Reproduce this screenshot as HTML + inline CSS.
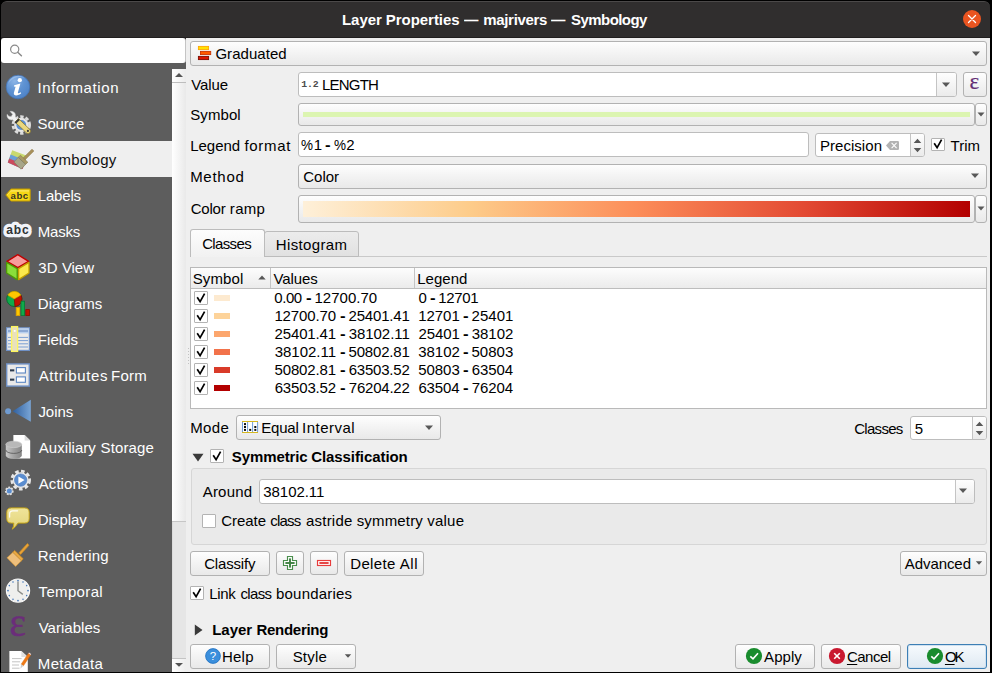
<!DOCTYPE html>
<html><head><meta charset="utf-8"><title>Layer Properties</title>
<style>
html,body{margin:0;padding:0;background:#000;}
body{width:992px;height:673px;overflow:hidden;font-family:"Liberation Sans",sans-serif;font-size:15px;}
#win{position:relative;width:992px;height:673px;overflow:hidden;background:#000;}
.t{position:absolute;white-space:nowrap;line-height:20px;}
.a{position:absolute;box-sizing:border-box;}
svg.a{overflow:visible;}
.btn{border:1px solid #b2b2b2;border-radius:3px;background:linear-gradient(#fefefe,#f4f4f4 45%,#e9e9e9);}
.inp{border:1px solid #bdbdbd;border-radius:3px;background:#fff;}
.cb{border:1px solid #b3b3b3;border-radius:1px;background:#fff;}
.sep{width:1px;background:#c4c4c4;}
u{text-decoration-thickness:1px;text-underline-offset:2px;}

</style></head>
<body>
<div id="win">
<!-- title bar -->
<div class="a" style="left:1px;top:1px;width:989px;height:37px;background:#302e2e;border-radius:6px 6px 0 0;border-top:1px solid #4b4949;"></div>
<div class="a" style="left:962.8px;top:9.8px;width:18.4px;height:18.4px;border-radius:10px;background:#e95420;"></div>
<svg class="a" style="left:962px;top:9px" width="20" height="20" viewBox="0 0 20 20"><path d="M6.5 6.5 L13.5 13.5 M13.5 6.5 L6.5 13.5" stroke="#fff" stroke-width="1.3" stroke-linecap="round" fill="none"/></svg>
<!-- panel background -->
<div class="a" style="left:1px;top:38px;width:989px;height:634px;background:#efefef;"></div>
<!-- search box -->
<div class="a" style="left:1px;top:37px;width:989px;height:1px;background:#211f1f;"></div>
<div class="a" style="left:1px;top:38px;width:185px;height:12px;background:#2a2828;"></div>
<div class="a" style="left:1px;top:50px;width:185px;height:14px;background:#5d5d5d;"></div>
<div class="a" style="left:1px;top:38px;width:185px;height:24.5px;background:#fff;border-right:1px solid #c4c4c4;border-radius:3px;"></div>
<svg class="a" style="left:9px;top:43.5px" width="14" height="14" viewBox="0 0 14 14"><circle cx="5.7" cy="5.3" r="4.1" stroke="#8a8a8a" stroke-width="1.2" fill="none"/><path d="M8.7 8.3 L12.4 11.7" stroke="#8a8a8a" stroke-width="1.5" stroke-linecap="round"/></svg>
<!-- sidebar -->
<div class="a" style="left:1px;top:63px;width:185px;height:6px;background:#5d5d5d;"></div>
<div class="a" style="left:1px;top:69px;width:171px;height:603px;background:#5d5d5d;"></div>
<div class="a" style="left:1px;top:141px;width:171px;height:36px;background:#efefef;"></div>
<!-- sidebar scrollbar -->
<div class="a" style="left:172px;top:69px;width:14px;height:603px;background:#e6e6e6;border-left:1px solid #dcdcdc;"></div>
<div class="a" style="left:172px;top:69px;width:14px;height:14px;background:linear-gradient(90deg,#fff,#ececec);border-bottom:1px solid #bdbdbd;"></div>
<div class="a" style="left:172px;top:83px;width:14px;height:439px;background:linear-gradient(90deg,#fff,#e9e9e9);border-bottom:1px solid #c6c6c6;"></div>
<div class="a" style="left:172px;top:658px;width:14px;height:14px;background:linear-gradient(90deg,#fff,#eeeeee);border-top:1px solid #c4c4c4;"></div>
<svg class="a" style="left:172px;top:69px" width="14" height="14" viewBox="0 0 14 14"><path d="M3 7.9 L7 3.9 L11 7.9 Z" fill="#555"/></svg>
<svg class="a" style="left:172px;top:658px" width="14" height="14" viewBox="0 0 14 14"><path d="M3 5 L7 8.8 L11 5 Z" fill="#555"/></svg>

<!-- Graduated combo -->
<div class="a btn" style="left:190px;top:41px;width:797px;height:25px;"></div>
<svg class="a" style="left:197px;top:45px" width="15" height="16" viewBox="0 0 15 16"><rect x="1.4" y="1.4" width="10.2" height="3.2" fill="#ffe100" stroke="#ffa600" stroke-width="0.9"/><rect x="3.5" y="6.4" width="10.2" height="3.2" fill="#ff5a00" stroke="#c93400" stroke-width="0.9"/><rect x="1.4" y="11.4" width="10.2" height="3.2" fill="#da1500" stroke="#7c0b00" stroke-width="0.9"/></svg>
<svg class="a" style="left:970.5px;top:50.8px" width="10" height="6" viewBox="0 0 10 6"><path d="M1 0.5 L9 0.5 L5 5 Z" fill="#585858"/></svg>

<!-- Value combo -->
<div class="a inp" style="left:298px;top:72px;width:659px;height:25px;"></div>
<div class="a" style="left:936px;top:73px;width:20px;height:23px;border-left:1px solid #c4c4c4;border-radius:0 2px 2px 0;background:linear-gradient(#fefefe,#ebebeb);"></div>
<svg class="a" style="left:940.6px;top:82px" width="10" height="6" viewBox="0 0 10 6"><path d="M1 0.5 L9 0.5 L5 5 Z" fill="#585858"/></svg>
<span class="t" style="left:301.2px;top:77.8px;font-family:'Liberation Mono',monospace;font-size:9.9px;color:#4c4c4c;letter-spacing:-0.1px;font-weight:700;line-height:14px;">1.2</span>
<!-- epsilon button -->
<div class="a btn" style="left:963px;top:72px;width:24px;height:25px;"></div>
<span class="t" style="left:969.6px;top:70.2px;font-family:'Liberation Serif',serif;font-size:23px;color:#632c74;-webkit-text-stroke:0.2px #632c74;line-height:24px;">&#949;</span>

<!-- Symbol button -->
<div class="a btn" style="left:298px;top:103px;width:677px;height:23px;"></div>
<div class="a" style="left:303px;top:112px;width:667px;height:5px;background:#dcf5b1;"></div>
<div class="a btn" style="left:975px;top:103px;width:12px;height:23px;"></div>
<svg class="a" style="left:977px;top:112px" width="8" height="5" viewBox="0 0 8 5"><path d="M0.5 0.5 L7.5 0.5 L4 4.5 Z" fill="#585858"/></svg>

<!-- Legend format -->
<div class="a inp" style="left:298px;top:132px;width:511px;height:25px;"></div>
<!-- Precision spin -->
<div class="a inp" style="left:815px;top:133px;width:110px;height:24px;"></div>
<div class="a" style="left:910px;top:134px;width:14px;height:22px;border-left:1px solid #c4c4c4;border-radius:0 2px 2px 0;background:linear-gradient(#fefefe,#ebebeb);"></div>
<svg class="a" style="left:913px;top:138px" width="9" height="15" viewBox="0 0 9 15"><path d="M0.7 5 L4.5 0.8 L8.3 5 Z M0.7 10 L8.3 10 L4.5 14.2 Z" fill="#585858"/></svg>
<svg class="a" style="left:886px;top:140.7px" width="13" height="9" viewBox="0 0 13 9"><path d="M4 0 H11.8 A1.2 1.2 0 0 1 13 1.2 V7.8 A1.2 1.2 0 0 1 11.8 9 H4 L0 4.5 Z" fill="#b3b3b3"/><path d="M5.6 1.9 L10.6 7.1 M10.6 1.9 L5.6 7.1" stroke="#fff" stroke-width="1.1"/></svg>
<!-- Trim checkbox -->
<div class="a cb" style="left:931px;top:137.5px;width:14px;height:13.7px;"></div>
<svg class="a" style="left:931px;top:137.4px" width="14" height="14" viewBox="0 0 14 14"><path d="M3.2 6.3 L6.1 10.7 L10.6 2.7" stroke="#000" stroke-width="1.7" fill="none"/></svg>

<!-- Method combo -->
<div class="a btn" style="left:298px;top:164px;width:689px;height:25px;"></div>
<svg class="a" style="left:970px;top:173px" width="10" height="6" viewBox="0 0 10 6"><path d="M1 0.5 L9 0.5 L5 5 Z" fill="#585858"/></svg>

<!-- Color ramp -->
<div class="a btn" style="left:298px;top:195px;width:677px;height:28px;"></div>
<div class="a" style="left:303px;top:201px;width:667px;height:16px;background:linear-gradient(90deg,#fef0d9 0%,#fdcc8a 25%,#fc8d59 50%,#e34a33 75%,#b30000 100%);"></div>
<div class="a btn" style="left:975px;top:195px;width:12px;height:28px;"></div>
<svg class="a" style="left:977px;top:206px" width="8" height="5" viewBox="0 0 8 5"><path d="M0.5 0.5 L7.5 0.5 L4 4.5 Z" fill="#585858"/></svg>

<!-- Tabs -->
<div class="a" style="left:190px;top:256px;width:797px;height:1px;background:#c9c9c9;"></div>
<div class="a" style="left:264px;top:231px;width:95px;height:26px;border:1px solid #bcbcbc;border-radius:3px 3px 0 0;background:linear-gradient(#ececec,#e1e1e1);"></div>
<div class="a" style="left:190px;top:229px;width:75px;height:28px;border:1px solid #bcbcbc;border-bottom:none;border-radius:3px 3px 0 0;background:linear-gradient(#fdfdfd,#f1f1f1);"></div>

<!-- Tree -->
<div class="a" style="left:190px;top:267px;width:797px;height:142px;border:1px solid #b9b9b9;background:#fff;"></div>
<div class="a" style="left:191px;top:268px;width:795px;height:21px;background:linear-gradient(#fdfdfd,#ebebeb);border-bottom:1px solid #bdbdbd;"></div>
<div class="a sep" style="left:270px;top:268px;height:20px;"></div>
<div class="a sep" style="left:414px;top:268px;height:20px;"></div>
<svg class="a" style="left:258px;top:275px" width="8" height="5" viewBox="0 0 8 5"><path d="M0.3 4.6 L4 0.6 L7.7 4.6 Z" fill="#585858"/></svg>
<!-- splitter handle dots -->
<div class="a" style="left:188px;top:348px;width:1px;height:17px;background:repeating-linear-gradient(#c2c2c2 0 1px,transparent 1px 3px);"></div>
<!-- tree rows -->
<div class="a cb" style="left:194px;top:291px;width:14px;height:14px;"></div>
<svg class="a" style="left:194px;top:291px" width="14" height="14" viewBox="0 0 14 14"><path d="M3.2 6.3 L6.1 10.7 L10.6 2.7" stroke="#000" stroke-width="1.7" fill="none"/></svg>
<div class="a" style="left:214px;top:295px;width:16px;height:6px;background:#fdead0;"></div>
<div class="a cb" style="left:194px;top:309px;width:14px;height:14px;"></div>
<svg class="a" style="left:194px;top:309px" width="14" height="14" viewBox="0 0 14 14"><path d="M3.2 6.3 L6.1 10.7 L10.6 2.7" stroke="#000" stroke-width="1.7" fill="none"/></svg>
<div class="a" style="left:214px;top:313px;width:16px;height:6px;background:#fdd39a;"></div>
<div class="a cb" style="left:194px;top:327px;width:14px;height:14px;"></div>
<svg class="a" style="left:194px;top:327px" width="14" height="14" viewBox="0 0 14 14"><path d="M3.2 6.3 L6.1 10.7 L10.6 2.7" stroke="#000" stroke-width="1.7" fill="none"/></svg>
<div class="a" style="left:214px;top:331px;width:16px;height:6px;background:#fca66d;"></div>
<div class="a cb" style="left:194px;top:345px;width:14px;height:14px;"></div>
<svg class="a" style="left:194px;top:345px" width="14" height="14" viewBox="0 0 14 14"><path d="M3.2 6.3 L6.1 10.7 L10.6 2.7" stroke="#000" stroke-width="1.7" fill="none"/></svg>
<div class="a" style="left:214px;top:349px;width:16px;height:6px;background:#f2724a;"></div>
<div class="a cb" style="left:194px;top:363px;width:14px;height:14px;"></div>
<svg class="a" style="left:194px;top:363px" width="14" height="14" viewBox="0 0 14 14"><path d="M3.2 6.3 L6.1 10.7 L10.6 2.7" stroke="#000" stroke-width="1.7" fill="none"/></svg>
<div class="a" style="left:214px;top:367px;width:16px;height:6px;background:#d93b29;"></div>
<div class="a cb" style="left:194px;top:381px;width:14px;height:14px;"></div>
<svg class="a" style="left:194px;top:381px" width="14" height="14" viewBox="0 0 14 14"><path d="M3.2 6.3 L6.1 10.7 L10.6 2.7" stroke="#000" stroke-width="1.7" fill="none"/></svg>
<div class="a" style="left:214px;top:385px;width:16px;height:6px;background:#b30000;"></div>
<!-- Mode combo -->
<div class="a btn" style="left:236px;top:415px;width:205px;height:25px;"></div>
<svg class="a" style="left:242px;top:421px" width="16" height="12" viewBox="0 0 16 12"><rect x="0" y="0" width="16" height="12" fill="#fff"/><path d="M0.5 1 V11 M5.6 1 V11 M10.6 1 V11 M15.6 1 V11" stroke="#6f9dda" stroke-width="1"/><path d="M0 0.5 H16 M0 11.5 H16" stroke="#d6b81f" stroke-width="1"/><g fill="#111"><rect x="2" y="2.1" width="2" height="2"/><rect x="2" y="5" width="2" height="2"/><rect x="2" y="7.9" width="2" height="2"/><rect x="7.2" y="7.9" width="2" height="2"/><rect x="12.3" y="5" width="2" height="2"/><rect x="12.3" y="7.9" width="2" height="2"/></g></svg>
<svg class="a" style="left:424px;top:425px" width="10" height="6" viewBox="0 0 10 6"><path d="M1 0.5 L9 0.5 L5 5 Z" fill="#585858"/></svg>
<!-- Classes spin -->
<div class="a inp" style="left:910px;top:416px;width:77px;height:24px;"></div>
<div class="a" style="left:972px;top:417px;width:14px;height:22px;border-left:1px solid #c4c4c4;border-radius:0 2px 2px 0;background:linear-gradient(#fefefe,#ebebeb);"></div>
<svg class="a" style="left:975px;top:421px" width="9" height="15" viewBox="0 0 9 15"><path d="M0.7 5 L4.5 0.8 L8.3 5 Z M0.7 10 L8.3 10 L4.5 14.2 Z" fill="#585858"/></svg>

<!-- Symmetric classification -->
<svg class="a" style="left:192px;top:453px" width="12" height="9" viewBox="0 0 12 9"><path d="M0.5 0.8 L11.5 0.8 L6 8.5 Z" fill="#3a3a3a"/></svg>
<div class="a cb" style="left:210px;top:449px;width:14px;height:14px;"></div>
<svg class="a" style="left:210px;top:449px" width="14" height="14" viewBox="0 0 14 14"><path d="M3.2 6.3 L6.1 10.7 L10.6 2.7" stroke="#000" stroke-width="1.7" fill="none"/></svg>
<div class="a" style="left:191px;top:468px;width:796px;height:77px;border:1px solid #d6d6d6;border-radius:3px;background:#eaeaea;"></div>
<div class="a inp" style="left:259px;top:479px;width:716px;height:25px;"></div>
<div class="a" style="left:955px;top:480px;width:19px;height:23px;border-left:1px solid #c4c4c4;border-radius:0 2px 2px 0;background:linear-gradient(#fefefe,#ebebeb);"></div>
<svg class="a" style="left:958px;top:488px" width="10" height="6" viewBox="0 0 10 6"><path d="M1 0.5 L9 0.5 L5 5 Z" fill="#585858"/></svg>
<div class="a cb" style="left:202px;top:514px;width:14px;height:14px;"></div>

<!-- buttons row -->
<div class="a btn" style="left:190px;top:551px;width:80px;height:25px;"></div>
<div class="a btn" style="left:276px;top:551px;width:28px;height:24px;"></div>
<svg class="a" style="left:282px;top:555px" width="16" height="16" viewBox="0 0 16 16"><path d="M5.5 1.5 H10.5 V5.5 H14.5 V10.5 H10.5 V14.5 H5.5 V10.5 H1.5 V5.5 H5.5 Z" fill="#fdfffd" stroke="#4a8e4c" stroke-width="1.15"/><rect x="3.4" y="7.05" width="9.2" height="1.9" fill="#3f8242"/><rect x="7.05" y="3.4" width="1.9" height="9.2" fill="#3f8242"/></svg>
<div class="a btn" style="left:310px;top:551px;width:28px;height:24px;"></div>
<svg class="a" style="left:316px;top:555px" width="16" height="16" viewBox="0 0 16 16"><rect x="1.5" y="5.5" width="13" height="5" fill="#fffafa" stroke="#e83c3c" stroke-width="1.15"/><rect x="3.4" y="7.1" width="9.2" height="1.8" fill="#e33434"/></svg>
<div class="a btn" style="left:344px;top:551px;width:80px;height:25px;"></div>
<div class="a btn" style="left:900px;top:551px;width:87px;height:25px;"></div>
<svg class="a" style="left:975px;top:561px" width="8" height="4" viewBox="0 0 8 4"><path d="M0.8 0.3 L7.2 0.3 L4 3.7 Z" fill="#555"/></svg>
<!-- link class boundaries -->
<div class="a cb" style="left:190px;top:586px;width:14px;height:14px;"></div>
<svg class="a" style="left:190px;top:586px" width="14" height="14" viewBox="0 0 14 14"><path d="M3.2 6.3 L6.1 10.7 L10.6 2.7" stroke="#000" stroke-width="1.7" fill="none"/></svg>
<!-- Layer rendering -->
<svg class="a" style="left:194px;top:624px" width="9" height="12" viewBox="0 0 9 12"><path d="M0.8 0.5 L8.5 6 L0.8 11.5 Z" fill="#3a3a3a"/></svg>

<!-- bottom buttons -->
<div class="a btn" style="left:190px;top:644px;width:80px;height:25px;"></div>
<svg class="a" style="left:205px;top:648px" width="16" height="16" viewBox="0 0 16 16"><circle cx="8" cy="8" r="7.4" fill="#3b8fdc" stroke="#1d6fc0" stroke-width="0.8"/><text x="8" y="12.2" font-family="Liberation Sans" font-size="11.5" fill="#fff" text-anchor="middle">?</text></svg>
<div class="a btn" style="left:276px;top:644px;width:80px;height:25px;"></div>
<svg class="a" style="left:344px;top:654px" width="8" height="4" viewBox="0 0 8 4"><path d="M0.8 0.3 L7.2 0.3 L4 3.7 Z" fill="#555"/></svg>
<div class="a btn" style="left:735px;top:644px;width:80px;height:25px;"></div>
<svg class="a" style="left:746px;top:648px" width="16" height="16" viewBox="0 0 16 16"><circle cx="8" cy="8" r="8.1" fill="#198c2e"/><path d="M4.3 8.3 L7 10.8 L12 5.2" stroke="#fff" stroke-width="1.6" fill="none"/></svg>
<div class="a btn" style="left:821px;top:644px;width:80px;height:25px;"></div>
<svg class="a" style="left:829px;top:648px" width="16" height="16" viewBox="0 0 16 16"><circle cx="8" cy="8" r="8.1" fill="#c9182f"/><path d="M5.2 5.2 L10.8 10.8 M10.8 5.2 L5.2 10.8" stroke="#fff" stroke-width="1.6" fill="none"/></svg>
<div class="a" style="left:907px;top:644px;width:80px;height:25px;border:1px solid #3d7fb5;border-radius:3px;background:linear-gradient(#f6fafd,#dfe9f2);box-shadow:inset 0 0 0 1px #cfe1f0;"></div>
<svg class="a" style="left:927px;top:648px" width="16" height="16" viewBox="0 0 16 16"><circle cx="8" cy="8" r="8.1" fill="#198c2e"/><path d="M4.3 8.3 L7 10.8 L12 5.2" stroke="#fff" stroke-width="1.6" fill="none"/></svg>
<!-- sidebar icons -->
<svg class="a" style="left:0;top:63px" width="186" height="609" viewBox="0 63 186 609">
<defs>
<radialGradient id="gi" cx="0.35" cy="0.25" r="0.9"><stop offset="0" stop-color="#8db5e6"/><stop offset="0.45" stop-color="#5f93d3"/><stop offset="1" stop-color="#4a7fc4"/></radialGradient>
<linearGradient id="gj" x1="0" x2="1"><stop offset="0" stop-color="#2f5f9e"/><stop offset="1" stop-color="#79a5d6"/></linearGradient>
<linearGradient id="gdb" x1="0" x2="1"><stop offset="0" stop-color="#c9c9c9"/><stop offset="0.5" stop-color="#a2a2a2"/><stop offset="1" stop-color="#858585"/></linearGradient>
<linearGradient id="gbub" x1="0" y1="0" x2="0" y2="1"><stop offset="0" stop-color="#efe49a"/><stop offset="1" stop-color="#e3d47a"/></linearGradient>
<clipPath id="cbot"><rect x="0" y="63" width="186" height="609"/></clipPath>
</defs>
<!-- Information -->
<circle cx="18" cy="87" r="11.8" fill="url(#gi)" stroke="#4473b5" stroke-width="0.8"/>
<path d="M8.2 84 A10.3 10.3 0 0 1 25 78.2 A13 13 0 0 0 8.2 84 Z" fill="#a9c8ee" opacity="0.55"/>
<circle cx="19.8" cy="80.2" r="2.15" fill="#fff"/>
<path d="M14.2 85.2 L20.4 83.6 L17.9 92.4 C17.7 93.4 18.4 93.6 20.6 92.2 L21.2 93.2 C18.4 96 13 96.4 13.9 92.8 L15.6 86.8 L13.9 86.5 Z" fill="#fff"/>
<!-- Source: gear + wrench -->
<circle cx="21.3" cy="125" r="8.3" fill="none" stroke="#dcdcdc" stroke-width="2.8" stroke-dasharray="3.4 2"/>
<circle cx="21.3" cy="125" r="7.2" fill="#e6e6e6"/>
<circle cx="21.3" cy="125" r="4.9" fill="#5a8dd0"/>
<path d="M7.2 114.2 C6.2 117.4 9 120.6 12.6 119.8 L15.8 123 L18.6 120.2 L15.4 117 C16.4 113.2 13.2 110.6 10 111.4 L12.6 114.2 L11.2 116.4 L8.8 116.2 Z" fill="#f2f2f2" stroke="#bdbdbd" stroke-width="0.5"/>
<path d="M15 122 L18.4 118.6 L29.8 129.4 C30.8 130.4 30.6 132 29.8 132.8 C29 133.6 27.4 133.8 26.4 132.8 Z" fill="#ead77e" stroke="#8a7a30" stroke-width="0.8"/>
<path d="M14.6 122.4 L18.4 118.6 L19.8 120 L16 123.8 Z" fill="#3a3a3a"/>
<circle cx="27.9" cy="130.9" r="1.1" fill="#3a3a3a"/>
<!-- Symbology -->
<path d="M12.2 150.2 L27 155.8 L22.6 169 L7.8 162.6 Z" fill="#c8d96f"/>
<path d="M10.6 154.6 L25.4 160.4 L22.6 169 L7.8 162.6 Z" fill="#6a9fd8"/>
<path d="M9.2 158.6 L24 164.6 L22.6 169 L7.8 162.6 Z" fill="#cc4a5c"/>
<path d="M32 149.2 L33.8 151 L24.8 160 L23 158.2 Z" fill="#a8905a" stroke="#8a7444" stroke-width="0.6"/>
<path d="M20.4 155.2 L27.8 162.2 L25.6 164.4 L18.2 157.4 Z" fill="#a89866" stroke="#857544" stroke-width="0.6"/>
<path d="M18.2 157.4 L25.6 164.4 L21 169.2 L14 162 Z" fill="#a7a588" stroke="#7f7d62" stroke-width="0.6"/>
<!-- Labels tag -->
<path d="M11 189 H29.4 Q30.2 189 30.2 189.8 V200.2 Q30.2 201 29.4 201 H11 L5.8 195 Z" fill="#f7d716" stroke="#c29a00" stroke-width="1"/>
<path d="M11.4 190.2 H29 V191.6 H11 L7.6 195 L7 194.8 Z" fill="#fbea7a" opacity="0.8"/>
<text x="19.6" y="198.6" font-family="Liberation Sans" font-weight="700" font-size="9.6" fill="#3a3522" text-anchor="middle" letter-spacing="0.5">abc</text>
<!-- Masks -->
<text x="18" y="234" font-family="Liberation Sans" font-weight="700" font-size="12" fill="#f1f3f8" stroke="#f1f3f8" stroke-width="6.6" stroke-linejoin="round" text-anchor="middle" letter-spacing="0.9">abc</text>
<text x="18" y="234" font-family="Liberation Sans" font-weight="700" font-size="12" fill="#2e3436" text-anchor="middle" letter-spacing="0.9">abc</text>
<!-- 3D view cube -->
<path d="M17.8 254.6 L28.6 261.4 L17.8 267.6 L7 261.4 Z" fill="#f79c9c" stroke="#c00000" stroke-width="1.3" stroke-linejoin="round"/>
<path d="M6.6 262.4 L17.2 268.6 V279.6 L6.6 273 Z" fill="#8ade3a" stroke="#4e9a06" stroke-width="1.3" stroke-linejoin="round"/>
<path d="M29 262.4 L18.6 268.6 V279.6 L29 273 Z" fill="#fbe84c" stroke="#c4a000" stroke-width="1.3" stroke-linejoin="round"/>
<!-- Diagrams -->
<circle cx="14.3" cy="298.9" r="7.6" fill="#0faa4b" stroke="#066a2c" stroke-width="0.9"/>
<path d="M14.3 298.9 L20.9 295.1 A7.6 7.6 0 0 1 14.9 306.5 Z" fill="#c01000" stroke="#7a0a00" stroke-width="0.7"/>
<path d="M14.3 298.9 L7.7 295.1 A7.6 7.6 0 0 1 20.9 295.1 Z" fill="#fdc800" stroke="#d79a00" stroke-width="0.7"/>
<rect x="16.2" y="307.6" width="3.6" height="8" fill="#fdc800" stroke="#e0a000" stroke-width="0.8"/>
<rect x="21" y="301.2" width="3.6" height="14.4" fill="#0faa4b" stroke="#067a33" stroke-width="0.8"/>
<rect x="25.8" y="309.6" width="3.6" height="6" fill="#c01000" stroke="#8a0a00" stroke-width="0.8"/>
<!-- Fields -->
<rect x="6.6" y="327.8" width="22.8" height="22.6" fill="#ecebea" stroke="#6f90c4" stroke-width="1.2"/>
<rect x="7.2" y="328.4" width="21.6" height="5" fill="#b8cfee"/>
<path d="M8 331 H28" stroke="#6f90c4" stroke-width="1.2"/>
<path d="M8 337.4 H28 M8 340.6 H28 M8 343.8 H28 M8 347 H28" stroke="#7a9fd3" stroke-width="1"/>

<rect x="11.6" y="326.6" width="6" height="24.8" fill="#e9e1bd" stroke="#fdf65e" stroke-width="1.3"/>
<rect x="13.8" y="330" width="1.8" height="1.8" fill="#fff"/>
<!-- Attributes form -->
<rect x="6.7" y="363.9" width="22.6" height="22.2" fill="#e9e9e9" stroke="#6f90c4" stroke-width="1.4"/>
<rect x="16.4" y="367.6" width="9" height="5.4" fill="#fff" stroke="#5b86c2" stroke-width="1.1"/>
<rect x="16.4" y="376.9" width="9" height="5.4" fill="#fff" stroke="#5b86c2" stroke-width="1.1"/>
<rect x="10" y="369.3" width="4.3" height="2.1" fill="#2d3b4d"/>
<rect x="10" y="378.6" width="4.3" height="2.1" fill="#2d3b4d"/>
<!-- Joins -->
<circle cx="8.1" cy="411.2" r="3" fill="#6f9bd1"/>
<path d="M12.6 411.2 L30.8 399.8 V421.8 Z" fill="url(#gj)"/>
<!-- Auxiliary storage -->
<path d="M13.4 435 H24.6 L30.2 440.6 V458.6 H13.4 Z" fill="#fff"/>
<path d="M24.6 435 V440.6 H30.2 Z" fill="#dcdcdc"/>
<path d="M5.8 444.4 V455.6 A8 3.4 0 0 0 21.8 455.6 V444.4 Z" fill="url(#gdb)"/>
<path d="M5.8 450 A8 3.4 0 0 0 21.8 450" fill="none" stroke="#5d5d5d" stroke-width="0.9"/>
<ellipse cx="13.8" cy="444.4" rx="8" ry="3.2" fill="#b8b8b8" stroke="#d0d0d0" stroke-width="0.6"/>
<!-- Actions -->
<circle cx="20.7" cy="480.1" r="8.9" fill="none" stroke="#e6e6e6" stroke-width="2.8" stroke-dasharray="3.6 2.4"/>
<circle cx="20.7" cy="480.1" r="7.9" fill="#ececec"/>
<circle cx="20.7" cy="480.1" r="6.2" fill="#5a8dd0" stroke="#4877b8" stroke-width="0.6"/>
<path d="M18.4 476.4 L24.6 480.1 L18.4 483.8 Z" fill="#fff"/>
<circle cx="9.3" cy="491" r="3.6" fill="none" stroke="#dcdcdc" stroke-width="1.6" stroke-dasharray="1.8 1.3"/>
<circle cx="9.3" cy="491" r="3.4" fill="#e2e2e2"/>
<circle cx="9.3" cy="491" r="2.5" fill="#5a8dd0"/>
<!-- Display bubble -->
<path d="M11.4 507.9 H24.6 Q29.2 507.9 29.2 512.4 V518.6 Q29.2 523.1 24.6 523.1 H18 Q15.6 527.2 12.2 529.2 Q14.2 526 13.8 523.1 H11.4 Q6.8 523.1 6.8 518.6 V512.4 Q6.8 507.9 11.4 507.9 Z" fill="url(#gbub)" stroke="#c8a614" stroke-width="1"/>
<path d="M9.6 517 V513.8 Q9.6 510.8 12.8 510.8 H17.6" fill="none" stroke="#fff" stroke-width="1.3" stroke-linecap="round" opacity="0.9"/>
<!-- Rendering brush -->
<path d="M27.4 543.6 L29 545.2 L20.6 554.4 L19 552.8 Z" fill="#e8a33a" stroke="#d08c1c" stroke-width="0.7"/>
<path d="M14.6 550.4 L23.2 558.8 L21.4 560.8 L12.8 552.4 Z" fill="#e9a844" stroke="#d08c1c" stroke-width="0.7"/>
<path d="M12.8 552.4 L21.4 560.8 L15.6 566.4 L7 557.8 Z" fill="#eebf7c" stroke="#d59a3a" stroke-width="0.7"/>
<!-- Temporal clock -->
<circle cx="18" cy="590.6" r="11.6" fill="#efefed" stroke="#fafafa" stroke-width="1.2"/>
<g fill="#4a7cbc">
<circle cx="18" cy="580.6" r="0.9"/><circle cx="23" cy="581.94" r="0.8"/><circle cx="26.66" cy="585.6" r="0.8"/><circle cx="28" cy="590.6" r="0.9"/><circle cx="26.66" cy="595.6" r="0.8"/><circle cx="23" cy="599.26" r="0.8"/><circle cx="18" cy="600.6" r="0.9"/><circle cx="13" cy="599.26" r="0.8"/><circle cx="9.34" cy="595.6" r="0.8"/><circle cx="8" cy="590.6" r="0.9"/><circle cx="9.34" cy="585.6" r="0.8"/><circle cx="13" cy="581.94" r="0.8"/>
</g>
<path d="M18 581.4 V590.8 L22.8 594.4" fill="none" stroke="#8a8c88" stroke-width="1.4" stroke-linejoin="round"/>
<!-- Variables epsilon -->
<text x="9.4" y="635.6" font-family="Liberation Serif" font-size="40" fill="#6b2d7a" stroke="#6b2d7a" stroke-width="0.5" textLength="16.4" lengthAdjust="spacingAndGlyphs">&#949;</text>
<!-- Metadata -->
<g clip-path="url(#cbot)">
<path d="M9.4 651 H21.4 L27.8 657 V673 H9.4 Z" fill="#fff"/>
<path d="M21.4 651 V657 H27.8 Z" fill="#e0e0e0"/>
<path d="M12 658.6 H21.6 M12 661.8 H20 M12 665 H19 M12 668.2 H19.6" stroke="#c4c4c4" stroke-width="1"/>
<path d="M28.4 653.4 L30.6 655 L23.4 665.8 L21.2 664.2 Z" fill="#ef7a17" stroke="#d96a0a" stroke-width="0.5"/>
<path d="M21.2 664.2 L23.4 665.8 L20.4 668.8 Z" fill="#cfcfcf"/>
<path d="M28.4 653.4 L29 652.4 L31.2 654 L30.6 655 Z" fill="#f3d9d9"/>
</g>
</svg>

<!-- text -->
<span class="t" style="left:341.99px;top:9.80px;font-size:15px;color:#fff;font-weight:700;letter-spacing:-0.053px;">Layer Properties</span>
<span class="t" style="left:464.10px;top:9.80px;font-size:15px;color:#fff;font-weight:700;letter-spacing:1.200px;display:inline-block;transform:scaleX(0.96);transform-origin:0 0;">—</span>
<span class="t" style="left:483.23px;top:9.80px;font-size:15px;color:#fff;font-weight:700;letter-spacing:-0.317px;">majrivers</span>
<span class="t" style="left:551.30px;top:9.80px;font-size:15px;color:#fff;font-weight:700;letter-spacing:1.200px;display:inline-block;transform:scaleX(0.96);transform-origin:0 0;">—</span>
<span class="t" style="left:571.01px;top:9.80px;font-size:15px;color:#fff;font-weight:700;letter-spacing:-0.554px;">Symbology</span>
<span class="t" style="left:37.41px;top:77.80px;font-size:15px;color:#fff;letter-spacing:0.608px;">Information</span>
<span class="t" style="left:37.59px;top:113.80px;font-size:15px;color:#fff;letter-spacing:-0.166px;">Source</span>
<span class="t" style="left:40.59px;top:149.80px;font-size:15px;color:#111;letter-spacing:0.187px;">Symbology</span>
<span class="t" style="left:37.81px;top:185.80px;font-size:15px;color:#fff;letter-spacing:-0.181px;">Labels</span>
<span class="t" style="left:37.81px;top:221.80px;font-size:15px;color:#fff;letter-spacing:-0.202px;">Masks</span>
<span class="t" style="left:38.28px;top:257.80px;font-size:15px;color:#fff;letter-spacing:0.197px;">3D</span>
<span class="t" style="left:61.89px;top:257.80px;font-size:15px;color:#fff;letter-spacing:-0.052px;">View</span>
<span class="t" style="left:37.81px;top:293.80px;font-size:15px;color:#fff;letter-spacing:0.050px;">Diagrams</span>
<span class="t" style="left:37.81px;top:329.80px;font-size:15px;color:#fff;letter-spacing:0.057px;">Fields</span>
<span class="t" style="left:38.76px;top:365.80px;font-size:15px;color:#fff;letter-spacing:0.589px;">Attributes</span>
<span class="t" style="left:111.08px;top:365.80px;font-size:15px;color:#fff;letter-spacing:0.198px;">Form</span>
<span class="t" style="left:38.40px;top:401.80px;font-size:15px;color:#fff;letter-spacing:-0.022px;">Joins</span>
<span class="t" style="left:38.76px;top:437.80px;font-size:15px;color:#fff;letter-spacing:0.052px;">Auxiliary</span>
<span class="t" style="left:100.62px;top:437.80px;font-size:15px;color:#fff;letter-spacing:0.100px;">Storage</span>
<span class="t" style="left:38.76px;top:473.80px;font-size:15px;color:#fff;letter-spacing:0.064px;">Actions</span>
<span class="t" style="left:37.81px;top:509.80px;font-size:15px;color:#fff;letter-spacing:-0.022px;">Display</span>
<span class="t" style="left:37.81px;top:545.80px;font-size:15px;color:#fff;letter-spacing:0.201px;">Rendering</span>
<span class="t" style="left:38.56px;top:581.80px;font-size:15px;color:#fff;letter-spacing:0.349px;">Temporal</span>
<span class="t" style="left:38.68px;top:617.80px;font-size:15px;color:#fff;letter-spacing:0.031px;">Variables</span>
<span class="t" style="left:37.81px;top:653.80px;font-size:15px;color:#fff;letter-spacing:0.351px;">Metadata</span>
<span class="t" style="left:215.39px;top:43.80px;font-size:15px;color:#000;letter-spacing:0.045px;">Graduated</span>
<span class="t" style="left:191.23px;top:74.80px;font-size:15px;color:#000;letter-spacing:-0.122px;">Value</span>
<span class="t" style="left:322.08px;top:74.80px;font-size:15px;color:#000;letter-spacing:-0.816px;">LENGTH</span>
<span class="t" style="left:190.29px;top:104.80px;font-size:15px;color:#000;letter-spacing:0.077px;">Symbol</span>
<span class="t" style="left:190.14px;top:135.80px;font-size:15px;color:#000;letter-spacing:0.003px;">Legend</span>
<span class="t" style="left:244.40px;top:135.80px;font-size:15px;color:#000;letter-spacing:0.712px;">format</span>
<span class="t" style="left:300.95px;top:135.20px;font-size:15px;color:#000;letter-spacing:1.091px;display:inline-block;transform:scaleX(0.9);transform-origin:0 0;">%</span>
<span class="t" style="left:313.68px;top:135.20px;font-size:15px;color:#000;letter-spacing:-1.444px;">1</span>
<span class="t" style="left:325.00px;top:135.20px;font-size:15px;color:#000;letter-spacing:0.100px;display:inline-block;transform:scaleX(1.12);transform-origin:0 0;font-weight:700;">-</span>
<span class="t" style="left:333.75px;top:135.20px;font-size:15px;color:#000;letter-spacing:1.091px;display:inline-block;transform:scaleX(0.9);transform-origin:0 0;">%</span>
<span class="t" style="left:346.18px;top:135.20px;font-size:15px;color:#000;letter-spacing:0.156px;">2</span>
<span class="t" style="left:819.88px;top:136.00px;font-size:15px;color:#000;letter-spacing:0.054px;">Precision</span>
<span class="t" style="left:950.56px;top:135.80px;font-size:15px;color:#000;letter-spacing:0.041px;">Trim</span>
<span class="t" style="left:190.14px;top:166.80px;font-size:15px;color:#000;letter-spacing:0.739px;">Method</span>
<span class="t" style="left:303.33px;top:166.80px;font-size:15px;color:#000;letter-spacing:-0.063px;">Color</span>
<span class="t" style="left:190.67px;top:199.10px;font-size:15px;color:#000;letter-spacing:-0.192px;">Color</span>
<span class="t" style="left:229.87px;top:199.10px;font-size:15px;color:#000;letter-spacing:0.302px;">ramp</span>
<span class="t" style="left:202.18px;top:233.50px;font-size:15px;color:#000;letter-spacing:-0.649px;">Classes</span>
<span class="t" style="left:275.81px;top:235.00px;font-size:15px;color:#000;letter-spacing:0.346px;">Histogram</span>
<span class="t" style="left:192.65px;top:269.10px;font-size:15px;color:#000;letter-spacing:0.151px;">Symbol</span>
<span class="t" style="left:273.43px;top:269.10px;font-size:15px;color:#000;letter-spacing:-0.109px;">Values</span>
<span class="t" style="left:417.14px;top:269.10px;font-size:15px;color:#000;letter-spacing:0.033px;">Legend</span>
<span class="t" style="left:274.22px;top:288.20px;font-size:15px;color:#000;letter-spacing:-0.402px;">0.00</span>
<span class="t" style="left:306.20px;top:288.20px;font-size:15px;color:#000;letter-spacing:0.200px;display:inline-block;transform:scaleX(1.12);transform-origin:0 0;font-weight:700;">-</span>
<span class="t" style="left:314.38px;top:288.20px;font-size:15px;color:#000;letter-spacing:0.037px;">12700.70</span>
<span class="t" style="left:418.47px;top:288.20px;font-size:15px;color:#000;letter-spacing:-1.094px;">0</span>
<span class="t" style="left:429.80px;top:288.20px;font-size:15px;color:#000;letter-spacing:0.200px;display:inline-block;transform:scaleX(1.12);transform-origin:0 0;font-weight:700;">-</span>
<span class="t" style="left:438.14px;top:288.20px;font-size:15px;color:#000;letter-spacing:-0.304px;">12701</span>
<span class="t" style="left:274.38px;top:306.20px;font-size:15px;color:#000;letter-spacing:-0.136px;">12700.70</span>
<span class="t" style="left:339.80px;top:306.20px;font-size:15px;color:#000;letter-spacing:0.200px;display:inline-block;transform:scaleX(1.12);transform-origin:0 0;font-weight:700;">-</span>
<span class="t" style="left:348.57px;top:306.20px;font-size:15px;color:#000;letter-spacing:-0.190px;">25401.41</span>
<span class="t" style="left:418.14px;top:306.20px;font-size:15px;color:#000;letter-spacing:-0.011px;">12701</span>
<span class="t" style="left:463.00px;top:306.20px;font-size:15px;color:#000;letter-spacing:0.200px;display:inline-block;transform:scaleX(1.12);transform-origin:0 0;font-weight:700;">-</span>
<span class="t" style="left:471.57px;top:306.20px;font-size:15px;color:#000;letter-spacing:0.023px;">25401</span>
<span class="t" style="left:274.57px;top:324.20px;font-size:15px;color:#000;letter-spacing:-0.150px;">25401.41</span>
<span class="t" style="left:339.80px;top:324.20px;font-size:15px;color:#000;letter-spacing:0.200px;display:inline-block;transform:scaleX(1.12);transform-origin:0 0;font-weight:700;">-</span>
<span class="t" style="left:348.63px;top:324.20px;font-size:15px;color:#000;letter-spacing:-0.038px;">38102.11</span>
<span class="t" style="left:418.48px;top:324.20px;font-size:15px;color:#000;letter-spacing:-0.098px;">25401</span>
<span class="t" style="left:463.00px;top:324.20px;font-size:15px;color:#000;letter-spacing:0.200px;display:inline-block;transform:scaleX(1.12);transform-origin:0 0;font-weight:700;">-</span>
<span class="t" style="left:471.63px;top:324.20px;font-size:15px;color:#000;letter-spacing:0.017px;">38102</span>
<span class="t" style="left:274.63px;top:342.20px;font-size:15px;color:#000;letter-spacing:0.002px;">38102.11</span>
<span class="t" style="left:339.80px;top:342.20px;font-size:15px;color:#000;letter-spacing:0.200px;display:inline-block;transform:scaleX(1.12);transform-origin:0 0;font-weight:700;">-</span>
<span class="t" style="left:348.50px;top:342.20px;font-size:15px;color:#000;letter-spacing:-0.181px;">50802.81</span>
<span class="t" style="left:418.27px;top:342.20px;font-size:15px;color:#000;letter-spacing:-0.043px;">38102</span>
<span class="t" style="left:463.00px;top:342.20px;font-size:15px;color:#000;letter-spacing:0.200px;display:inline-block;transform:scaleX(1.12);transform-origin:0 0;font-weight:700;">-</span>
<span class="t" style="left:471.50px;top:342.20px;font-size:15px;color:#000;letter-spacing:0.023px;">50803</span>
<span class="t" style="left:274.50px;top:360.20px;font-size:15px;color:#000;letter-spacing:-0.140px;">50802.81</span>
<span class="t" style="left:339.80px;top:360.20px;font-size:15px;color:#000;letter-spacing:0.200px;display:inline-block;transform:scaleX(1.12);transform-origin:0 0;font-weight:700;">-</span>
<span class="t" style="left:348.68px;top:360.20px;font-size:15px;color:#000;letter-spacing:-0.206px;">63503.52</span>
<span class="t" style="left:418.16px;top:360.20px;font-size:15px;color:#000;letter-spacing:-0.028px;">50803</span>
<span class="t" style="left:463.00px;top:360.20px;font-size:15px;color:#000;letter-spacing:0.200px;display:inline-block;transform:scaleX(1.12);transform-origin:0 0;font-weight:700;">-</span>
<span class="t" style="left:471.68px;top:360.20px;font-size:15px;color:#000;letter-spacing:-0.054px;">63504</span>
<span class="t" style="left:274.68px;top:378.20px;font-size:15px;color:#000;letter-spacing:-0.163px;">63503.52</span>
<span class="t" style="left:339.80px;top:378.20px;font-size:15px;color:#000;letter-spacing:0.200px;display:inline-block;transform:scaleX(1.12);transform-origin:0 0;font-weight:700;">-</span>
<span class="t" style="left:348.78px;top:378.20px;font-size:15px;color:#000;letter-spacing:-0.220px;">76204.22</span>
<span class="t" style="left:418.39px;top:378.20px;font-size:15px;color:#000;letter-spacing:-0.126px;">63504</span>
<span class="t" style="left:463.00px;top:378.20px;font-size:15px;color:#000;letter-spacing:0.200px;display:inline-block;transform:scaleX(1.12);transform-origin:0 0;font-weight:700;">-</span>
<span class="t" style="left:471.78px;top:378.20px;font-size:15px;color:#000;letter-spacing:-0.079px;">76204</span>
<span class="t" style="left:190.14px;top:418.30px;font-size:15px;color:#000;letter-spacing:0.363px;">Mode</span>
<span class="t" style="left:261.22px;top:417.80px;font-size:15px;color:#000;letter-spacing:-0.204px;">Equal</span>
<span class="t" style="left:302.08px;top:417.80px;font-size:15px;color:#000;letter-spacing:0.486px;">Interval</span>
<span class="t" style="left:854.18px;top:419.00px;font-size:15px;color:#000;letter-spacing:-0.698px;">Classes</span>
<span class="t" style="left:914.70px;top:419.00px;font-size:15px;color:#000;letter-spacing:0.406px;">5</span>
<span class="t" style="left:231.80px;top:446.55px;font-size:15px;color:#000;font-weight:700;letter-spacing:-0.107px;">Symmetric</span>
<span class="t" style="left:311.28px;top:446.55px;font-size:15px;color:#000;font-weight:700;letter-spacing:-0.084px;">Classification</span>
<span class="t" style="left:202.76px;top:481.55px;font-size:15px;color:#000;letter-spacing:0.182px;">Around</span>
<span class="t" style="left:263.27px;top:481.55px;font-size:15px;color:#000;letter-spacing:-0.050px;">38102.11</span>
<span class="t" style="left:221.18px;top:511.30px;font-size:15px;color:#000;letter-spacing:-0.040px;">Create</span>
<span class="t" style="left:270.20px;top:511.30px;font-size:15px;color:#000;letter-spacing:-0.750px;">class</span>
<span class="t" style="left:306.03px;top:511.30px;font-size:15px;color:#000;letter-spacing:0.213px;">astride</span>
<span class="t" style="left:356.70px;top:511.30px;font-size:15px;color:#000;letter-spacing:0.167px;">symmetry</span>
<span class="t" style="left:427.17px;top:511.30px;font-size:15px;color:#000;letter-spacing:0.245px;">value</span>
<span class="t" style="left:204.18px;top:553.55px;font-size:15px;color:#000;letter-spacing:-0.164px;">Classify</span>
<span class="t" style="left:350.22px;top:553.55px;font-size:15px;color:#000;letter-spacing:0.352px;">Delete</span>
<span class="t" style="left:399.70px;top:553.55px;font-size:15px;color:#000;letter-spacing:0.657px;">All</span>
<span class="t" style="left:904.76px;top:553.55px;font-size:15px;color:#000;letter-spacing:-0.068px;">Advanced</span>
<span class="t" style="left:209.14px;top:583.55px;font-size:15px;color:#000;letter-spacing:-0.280px;">Link</span>
<span class="t" style="left:240.54px;top:583.55px;font-size:15px;color:#000;letter-spacing:-0.689px;">class</span>
<span class="t" style="left:276.05px;top:583.55px;font-size:15px;color:#000;letter-spacing:0.187px;">boundaries</span>
<span class="t" style="left:212.25px;top:619.80px;font-size:15px;color:#000;font-weight:700;letter-spacing:-0.052px;">Layer</span>
<span class="t" style="left:256.48px;top:619.80px;font-size:15px;color:#000;font-weight:700;letter-spacing:-0.280px;">Rendering</span>
<span class="t" style="left:221.88px;top:646.80px;font-size:15px;color:#000;letter-spacing:0.277px;">Help</span>
<span class="t" style="left:292.65px;top:646.80px;font-size:15px;color:#000;letter-spacing:0.188px;">Style</span>
<span class="t" style="left:764.09px;top:646.80px;font-size:15px;color:#000;letter-spacing:0.063px;">Apply</span>
<span class="t" style="left:846.93px;top:646.80px;font-size:15px;color:#000;letter-spacing:-0.495px;"><u>C</u>ancel</span>
<span class="t" style="left:944.93px;top:646.80px;font-size:15px;color:#000;letter-spacing:-2.007px;"><u>O</u>K</span>
</div>
</body></html>
